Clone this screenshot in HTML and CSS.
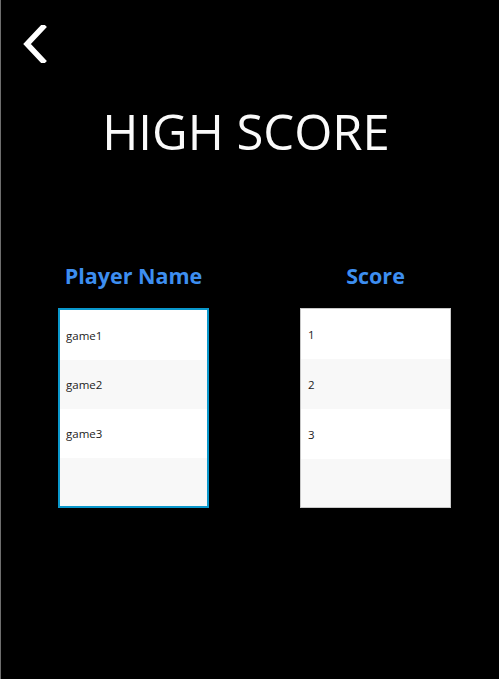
FILE: index.html
```html
<!DOCTYPE html>
<html>
<head>
<meta charset="utf-8">
<link rel="stylesheet" href="styles.css">
</head>
<body>
<div class="page">
  <div class="topbar">
    <button class="back" aria-label="Back">
      <svg width="24" height="38" viewBox="0 0 24 38"><path d="M20 2 L4 19 L20 36" fill="none" stroke="#fff" stroke-width="5.5" stroke-linecap="square" stroke-linejoin="miter"/></svg>
    </button>
  </div>
  <h1 class="title">HIGH SCORE</h1>
  <div class="boards">
    <div class="col">
      <h2 class="col-head">Player Name</h2>
      <div class="list list-active">
        <div class="row">game1</div>
        <div class="row alt">game2</div>
        <div class="row">game3</div>
        <div class="row alt"></div>
      </div>
    </div>
    <div class="col">
      <h2 class="col-head">Score</h2>
      <div class="list">
        <div class="row">1</div>
        <div class="row alt">2</div>
        <div class="row">3</div>
        <div class="row alt"></div>
      </div>
    </div>
  </div>
</div>
</body>
</html>
```
FILE: styles.css
```css
html, body {
  margin: 0;
  padding: 0;
  background: #000;
  height: 100%;
}
.page {
  min-height: 100%;
  border-left: 1px solid #6e6e6e;
  box-sizing: border-box;
  font-family: "Open Sans", "Noto Sans", sans-serif;
}
.topbar {
  display: flex;
  padding: 25px 0 0 22px;
  height: 40px;
}
.back {
  background: none;
  border: none;
  padding: 0;
  margin: 0;
  width: 24px;
  height: 38px;
  cursor: pointer;
}
.back svg { display: block; }
.title {
  margin: 31px 0 0 0;
  text-align: center;
  color: #fafafa;
  font-weight: 400;
  font-size: 49px;
  line-height: 70px;
  letter-spacing: 0;
  padding-right: 8px;
}
.boards {
  display: flex;
  justify-content: center;
  gap: 91px;
  margin-top: 96px;
  padding-left: 9px;
}
.col {
  display: flex;
  flex-direction: column;
  align-items: center;
}
.col-head {
  margin: 0 0 18px 0;
  color: #3d8ef0;
  font-family: "Open Sans", sans-serif;
  font-weight: 700;
  font-size: 21.5px;
  line-height: 28px;
}
.list {
  width: 151px;
  height: 200px;
  box-sizing: border-box;
  border: 1px solid #c8c8c8;
  background: #fff;
  display: flex;
  flex-direction: column;
  overflow: hidden;
}
.list-active {
  border: 2px solid #0a98cc;
}
.row {
  height: 50px;
  flex: none;
  display: flex;
  align-items: center;
  padding-left: 7px;
  font-size: 11.5px;
  color: #222;
  background: #fff;
}
.list-active .row { padding-left: 6px; height: 49px; }
.list-active .row:first-child { height: 50px; }
.row.alt { background: #f8f8f8; }
```
